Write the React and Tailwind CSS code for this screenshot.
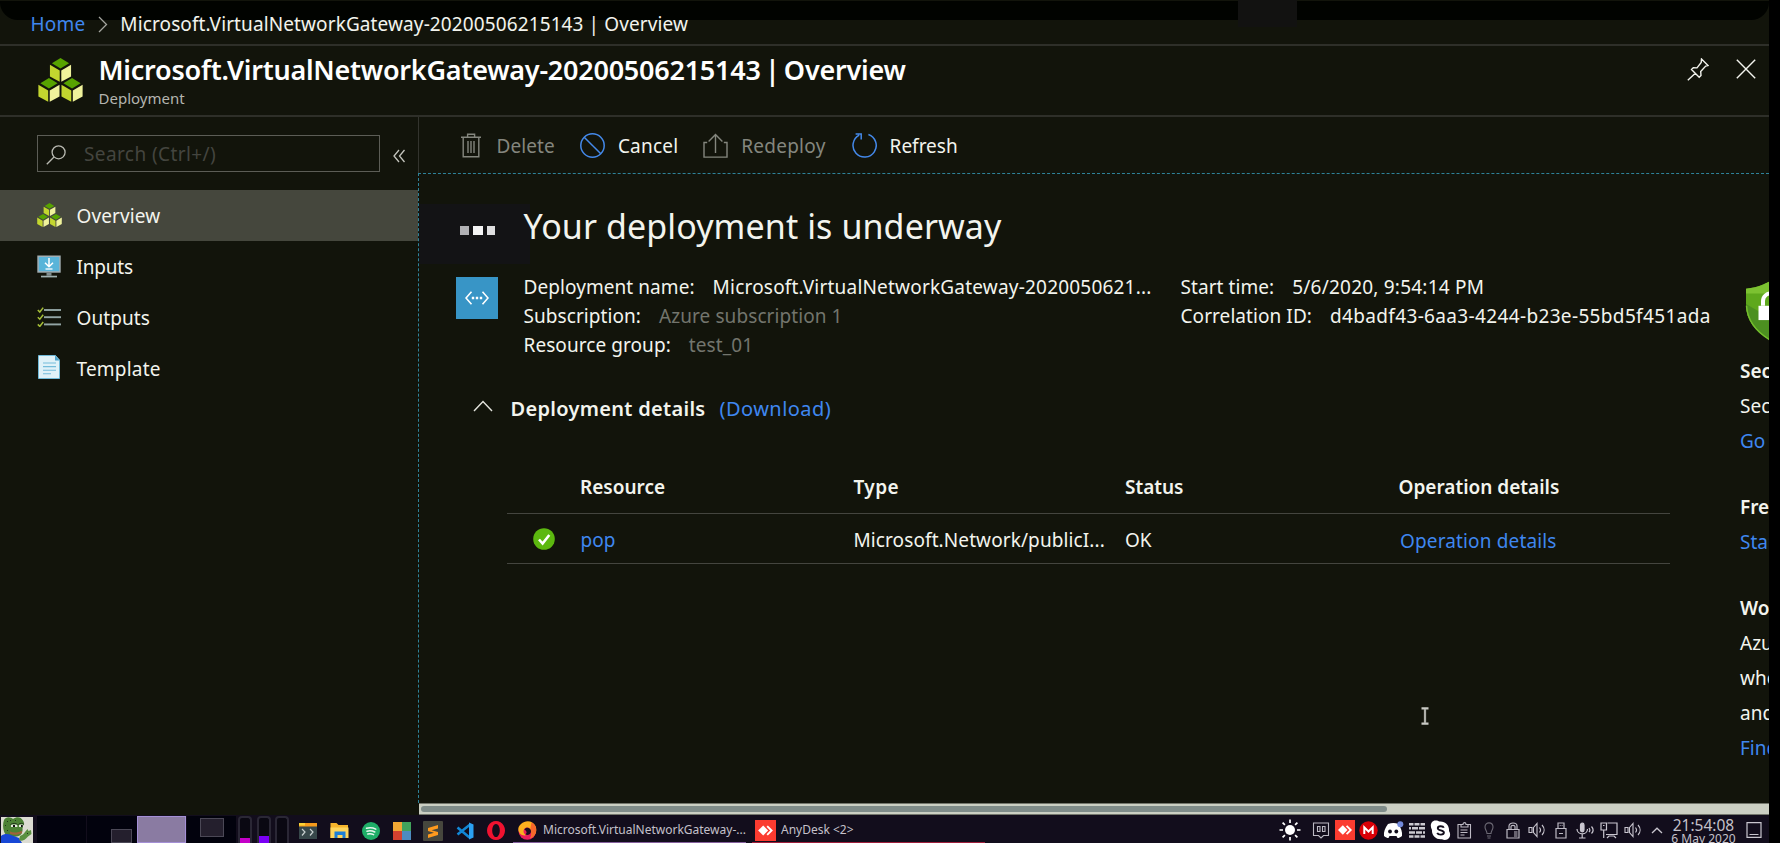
import React from 'react'

const Cubes = ({ className }) => (
  <svg viewBox="0 0 46 44" className={className} preserveAspectRatio="none">
    {[[0, 0], [-11.8, 20], [11.8, 20]].map(([x, y]) => (
      <g key={x} transform={`translate(${x} ${y})`}>
        <path d="M23 0l8.8 5.3L23 10.6l-8.8-5.3z" fill="#57a300" />
        <path d="M12.2 6.8l10 5.6v11.4l-10-5.4z" fill="#c3d62f" />
        <path d="M33.8 6.8l-10 5.6v11.4l10-5.4z" fill="#eff29b" />
      </g>
    ))}
  </svg>
)

const InputsIcon = () => (
  <svg viewBox="0 0 24 23" className="h-[23px] w-6">
    <path d="M0.3 0.5h23.4v17.2H0.3z" fill="#a3aeb2" />
    <path d="M1.8 2h20.4v14.2H1.8z" fill="#59b4d9" />
    <path d="M9.5 17.7h5v3h-5z" fill="#7f8c8d" />
    <path d="M4 20.7h16v1.7H4z" fill="#9fb0b0" />
    <path d="M12 3v8.5M8 7.8l4 4 4-4" stroke="#fff" strokeWidth="1.5" fill="none" />
    <path d="M8.5 14h7" stroke="#fff" strokeWidth="1.3" />
  </svg>
)

const OutputsIcon = () => (
  <svg viewBox="0 0 24 20" className="h-5 w-6">
    {[3, 10.2, 17.4].map((y) => (
      <g key={y} fill="none">
        <path d={`M0.8 ${y}l2 2 3.4-4.4`} stroke="#a5be38" strokeWidth="1.5" />
        <path d={`M7 ${y}h17`} stroke="#93a5a5" strokeWidth="1.9" />
      </g>
    ))}
  </svg>
)

const TemplateIcon = () => (
  <svg viewBox="0 0 22 24" className="-mt-[2px] ml-px h-6 w-[22px]">
    <path d="M0.5 0.5h17l4 4.6v18.4H0.5z" fill="#dff1f8" stroke="#6fb9d8" />
    <path d="M17 0.5l4.5 5H17z" fill="#4da3cb" />
    <path d="M5 8h13M5 11.6h13M5 15.2h13M5 18.8h8" stroke="#74bcda" strokeWidth="1.1" />
  </svg>
)

const TrashIcon = () => (
  <svg viewBox="0 0 25 25" className="size-[25px]" fill="none" stroke="#84867e" strokeWidth="1.4">
    <path d="M2 4.2h20M8.6 4V1.2h7V4M4.2 4.2v19.6h15.6V4.2M9 8v12M12 8v12M15 8v12" />
  </svg>
)
const CancelIcon = () => (
  <svg viewBox="0 0 25 25" className="size-[25px]" fill="none" stroke="#4489ea" strokeWidth="1.5">
    <circle cx="12.5" cy="12.5" r="11.7" />
    <path d="M4.2 4.2l16.6 16.6" />
  </svg>
)
const RedeployIcon = () => (
  <svg viewBox="0 0 25 25" className="size-[25px]" fill="none" stroke="#84867e" strokeWidth="1.4">
    <path d="M4.2 9.5H1v14.6h23V9.5h-3.2M12.5 20V1.5M5.6 8.6l6.9-7 6.9 7" />
  </svg>
)
const RefreshIcon = () => (
  <svg viewBox="0 0 25 25" className="size-[25px]" fill="none" stroke="#4489ea" strokeWidth="1.5">
    <path d="M16.4 1.5A11.6 11.6 0 1 1 7.2 2.2M3.6 1h5.6v5.6" />
  </svg>
)

const NAV = [
  { label: 'Overview', icon: <Cubes className="h-6 w-[25px]" />, active: true, cls: 'tracking-[0.1px]' },
  { label: 'Inputs', icon: <InputsIcon />, cls: 'tracking-[-0.2px]' },
  { label: 'Outputs', icon: <OutputsIcon />, cls: 'tracking-[0.1px]' },
  { label: 'Template', icon: <TemplateIcon />, cls: 'tracking-[0.2px]' },
]

const Field = ({ label, value, muted, cls = '' }) => (
  <div className="flex gap-[18px] whitespace-nowrap">
    <span className="tracking-[0.07px]">{label}</span>
    <span className={`${muted ? 'text-[#73756d]' : ''} ${cls}`}>{value}</span>
  </div>
)

const Shield = () => (
  <svg viewBox="0 0 54 64" className="h-[61px] w-[54px] shrink-0" preserveAspectRatio="none">
    <path d="M27 0c-5 0-8 6-26 8v16c0 18 10 30 26 39 16-9 26-21 26-39V8C35 6 32 0 27 0z" fill="#5ea81c" />
    <path d="M27 0c-5 0-8 6-26 8v5h52V8C35 6 32 0 27 0z" fill="#7cc231" />
    <path d="M1 24c0 18 10 30 26 39V40z" fill="#4c9020" />
    <path d="M1.5 26c1 17 10 28 25.500 37" stroke="#74bd2d" strokeWidth="1.5" fill="none" />
    <path d="M18 26v-5c0-11 18-11 18 0v5" stroke="#fff" strokeWidth="4" fill="none" />
    <path d="M13.500 26h27v15h-27z" fill="#fff" />
  </svg>
)

const Pepe = () => (
  <svg viewBox="0 0 32 26" className="ml-px h-[26px] w-8 shrink-0 self-end">
    <path d="M0 0h32v26H0z" fill="#dcdcd2" />
    <path d="M3 3c2-4 7-3 9-1 4-3 8-2 10 1.500 2 3 1 5-.5 7.500.5 4-1 8-6 8.500-5 1-11 0-12.500-5C1.500 10 2 6 3 3z" fill="#4d8236" />
    <path d="M0 19c3-2.500 7-2.500 10-1l8 3 3 5H0z" fill="#1747d6" />
    <path d="M19 19c2-1 4-2 5-4l2.500-3 1 2 2.500-1 .5 4-3.500 2.500c-3 4-7 5-9 3.500z" fill="#5a9140" />
    <path d="M10 7.500h6l.5 2.500H10zM18 7.500h4.500l.5 2.500h-5z" fill="#e9eee2" />
    <path d="M9.500 7.500c2.500-1.500 5-1.500 7 0M17.500 7.500c2-1.500 4-1.500 5.500 0" stroke="#20381a" strokeWidth="1" fill="none" />
    <path d="M12 8h2v2h-2zM20 8h1.800v2H20z" fill="#111" />
    <path d="M9 14.500c4 1.800 8 1 12-.5v2c-4 2-8 2.500-12 .8z" fill="#a0623c" />
    <path d="M6 4h1v1H6zM9 3h1v1H9zM4 8h1v1H4zM6 13h1v1H6zM26 16h1v1h-1zM14 3h1v1h-1z" fill="#20381a" />
  </svg>
)

const AnyDeskIcon = ({ className }) => (
  <svg viewBox="0 0 20 20" className={className}>
    <path d="M0 0h20v20H0z" fill="#fb3b30" />
    <path d="M7.800 5.300l4.700 4.700-4.700 4.700L3 10z" fill="#fff" />
    <path d="M11.600 5.800l4.200 4.200-4.200 4.200" stroke="#fff" strokeWidth="1.800" fill="none" />
  </svg>
)

const VolumeIcon = () => (
  <svg viewBox="0 0 18 16" className="h-4 w-[18px]" fill="none" stroke="#c9c6cf" strokeWidth="1.100">
    <path d="M1 5.500h3v5H1zM5.500 5.500l3.500-4v13l-3.500-4zM11.500 5.500c1.300 1.500 1.300 3.500 0 5M14 3c2.800 3 2.800 7 0 10" />
  </svg>
)

const Meter = ({ fill }) => (
  <div className="flex h-[27px] w-[14px] shrink-0 flex-col justify-end overflow-hidden rounded-t-[4px] border-2 border-b-0 border-[#2a2735] bg-[#0a0812]">
    <div className={fill} />
  </div>
)

const Tray = () => (
  <div className="flex h-full items-center pt-[2px]">
    <svg viewBox="0 0 22 22" className="size-[22px]" stroke="#fff" strokeWidth="1.700">
      <circle cx="11" cy="11" r="5" fill="#fff" stroke="none" />
      <path d="M11 0.500v3.500M11 18v3.500M0.500 11H4M18 11h3.500M3.600 3.600l2.300 2.300M16.100 16.100l2.300 2.300M3.600 18.400l2.300-2.300M16.100 5.900l2.300-2.300" />
    </svg>
    <svg viewBox="0 0 18 17" className="ml-[11px] h-[17px] w-[18px]" fill="none" stroke="#bdbac4" strokeWidth="1.100">
      <path d="M1.500 1h15v12.500h-5l-2.500 2.500-2.500-2.500h-5zM5.500 4.500h2.500v5H5.500zM10.500 4.500H13v5h-2.500z" />
    </svg>
    <AnyDeskIcon className="ml-[5px] size-5" />
    <svg viewBox="0 0 19 19" className="ml-[4px] size-[19px]">
      <circle cx="9.500" cy="9.500" r="9.200" fill="#d90007" />
      <path d="M5.300 13V6.300l4.200 4.200 4.200-4.200V13" stroke="#fff" strokeWidth="2" fill="none" />
    </svg>
    <svg viewBox="0 0 21 18" className="ml-[5px] h-[18px] w-[21px]">
      <path d="M5 3c4-1.300 7-1.300 10.500 0 2.500 4 4 8 3.500 12-2 1.500-3 2-4.500 2l-1-2h-7l-1 2C4 17 3 16.500 1 15c-.5-4 1-8 4-12z" fill="#fff" />
      <circle cx="7" cy="10.500" r="1.900" fill="#120d1c" />
      <circle cx="13.300" cy="10.500" r="1.900" fill="#120d1c" />
      <circle cx="17.300" cy="3.200" r="3" fill="#7289da" />
    </svg>
    <svg viewBox="0 0 16 15" className="ml-[5px] h-[15px] w-4" fill="#cbc9d0">
      <path d="M0 0h4.500v2.500H0zM5.500 0h5v2.500h-5zM11.500 0H16v2.500h-4.500zM0 4.100h2v2.500H0zM3 4.100h6v2.500H3zM10 4.100h6v2.500h-6zM0 8.200h6v2.500H0zM7 8.200h6v2.500H7zM14 8.200h2v2.500h-2zM0 12.300h4.500v2.500H0zM5.500 12.300h5v2.500h-5zM11.500 12.300H16v2.500h-4.500z" />
    </svg>
    <svg viewBox="0 0 21 21" className="ml-[5px] size-[21px]">
      <path d="M5.500 0.500c2 0 3 .6 4 1 6-.5 10 4 9.500 9.500 1.500 2.500 1.500 5 0 7s-4.500 2.500-7 1.300C6 20 1.500 15.500 2 10-.5 6 1 .5 5.500.500z" fill="#fff" />
      <path d="M13.800 7.800c-.8-2.200-6-2.200-6 .4 0 2.800 6.100 1.600 6.100 4.400 0 2.700-5.700 2.700-6.700.2" stroke="#120d1c" strokeWidth="1.900" fill="none" />
    </svg>
    <svg viewBox="0 0 15 17" className="ml-[6px] h-[17px] w-[15px]" fill="none" stroke="#bdbac4" strokeWidth="1.100">
      <path d="M4 2.500H1v13.500h12.500V2.500H11M4 5V2.500h2c0-2.500 3-2.500 3 0h2V5zM3.500 8h7M3.500 10.500h7M3.500 13h4" />
    </svg>
    <svg viewBox="0 0 10 17" className="ml-[12px] h-[17px] w-[10px]" fill="none" stroke="#6d6a75" strokeWidth="1.100">
      <path d="M3 11.500C3 9 1 8 1 5c0-5.500 8-5.500 8 0 0 3-2 4-2 6.500zM3 14h4M3.500 16h3" />
    </svg>
    <svg viewBox="0 0 14 17" className="ml-[12px] h-[17px] w-[14px]" fill="none" stroke="#bdbac4" strokeWidth="1.200">
      <path d="M1 7.500h12v8.500H1zM3 7.500V4c0-4 8-4 8 0v3.500M5 7V4.500c0-1.500 4-1.500 4 0V7M8 10h3.500M8 12h3.500M8 14h3.500" />
    </svg>
    <span className="ml-[8px]"><VolumeIcon /></span>
    <svg viewBox="0 0 12 17" className="ml-[9px] h-[17px] w-3" fill="none" stroke="#bdbac4" strokeWidth="1.200">
      <path d="M1 6.500h10V16H1zM3 6.500V1h6v5.500M4.800 3.500h.8M6.700 3.500h.8M4 11.500h4" />
    </svg>
    <svg viewBox="0 0 18 17" className="ml-[9px] h-[17px] w-[18px]" fill="none" stroke="#c9c6cf" strokeWidth="1.200">
      <path d="M4.500 3c0-2.500 3.500-2.500 3.500 0v5c0 2.500-3.500 2.500-3.500 0z" fill="#c9c6cf" />
      <path d="M1 7c0 6.500 10.500 6.500 10.500 0M6.200 12v4M3 16h6.500M13 6c1 1.300 1 3 0 4M15.500 4.500c2 2.300 2 5 0 7" />
    </svg>
    <svg viewBox="0 0 18 17" className="ml-[6px] h-[17px] w-[18px]" fill="none" stroke="#c9c6cf" strokeWidth="1.200">
      <path d="M7.500 1h9.500v11.500H7.500M1 1h5.500v7H1zM3.700 8v8M3 3.500h1.500M7 16l2-2h5l2 2M6 12.500h1.500" />
    </svg>
    <span className="ml-[6px]"><VolumeIcon /></span>
    <svg viewBox="0 0 12 7" className="ml-[9px] h-[7px] w-3" fill="none" stroke="#c9c6cf" strokeWidth="1.300">
      <path d="M1 6l5-4.800L11 6" />
    </svg>
    <div className="ml-[8px] w-[65px] self-start whitespace-nowrap text-center text-[#c4c1ca]">
      <div className="text-[15.5px] leading-[16px]">21:54:08</div>
      <div className="text-[12px] leading-[12px]">6 May 2020</div>
    </div>
    <svg viewBox="0 0 16 16" className="ml-[10px] size-4" fill="none" stroke="#c9c6cf" strokeWidth="1.200">
      <path d="M1 0.700h14v14.600H1zM3.500 12.500h9" />
    </svg>
  </div>
)

const Taskbar = () => (
  <div className="flex h-7 w-[1769px] shrink-0 items-center overflow-hidden bg-[#120d1c]">
    <Pepe />
    <div className="ml-1 flex h-full shrink-0 gap-px pt-px">
      <div className="w-[49px] bg-[#02020d]" />
      <div className="flex w-[50px] items-end justify-end bg-[#02020d] pr-[5px]">
        <div className="h-[14px] w-[21px] border border-[#4b4856] bg-[#241f2d]" />
      </div>
      <div className="-ml-px w-[49px] border border-[#a48fd6] bg-[#8a7ba2]" />
      <div className="w-[49px] bg-[#02020d] pl-[13px] pt-[2px]">
        <div className="h-[19px] w-6 border border-[#4b4856] bg-[#241f2d]" />
      </div>
    </div>
    <div className="ml-[2px] flex h-full shrink-0 gap-[4.500px] pt-px">
      <Meter fill="h-[5px] bg-[#c400c8]" />
      <Meter fill="h-[7px] bg-[#7a00f5]" />
      <Meter fill="h-0" />
    </div>
    <div className="ml-[10px] flex shrink-0 items-center pt-[3px]">
      <svg viewBox="0 0 18 16" className="h-4 w-[18px]">
        <path d="M0 2h18v14H0z" fill="#37474a" />
        <path d="M0 0h18v3.500H0z" fill="#f59a1b" />
        <path d="M0 0h6v2.500H0z" fill="#fbd235" />
        <path d="M3 6l3 3-3 3.500M11 6l3 3-3 3.500" stroke="#c8d0d0" strokeWidth="1.200" fill="none" />
      </svg>
      <svg viewBox="0 0 19 17" className="ml-[13px] h-[17px] w-[19px]">
        <path d="M0.500 1h6l2 2h9.500v13H.500z" fill="#f7b52c" />
        <path d="M.500 5.500h18V16H.500z" fill="#ffd65c" />
        <path d="M4.500 16V9.500h11V16h-3v-3h-5v3z" fill="#1d7fd6" />
      </svg>
      <svg viewBox="0 0 18 18" className="ml-[13px] size-[18px]">
        <circle cx="9" cy="9" r="9" fill="#1fae68" />
        <path d="M4.500 6.300c3-.8 6.500-.6 9.300.8M5 9.200c2.800-.7 5.400-.4 7.800.8M5.800 12c2.200-.5 4-.3 5.800.6" stroke="#e8f7ee" strokeWidth="1.500" fill="none" strokeLinecap="round" />
      </svg>
      <svg viewBox="0 0 18 18" className="ml-[13px] size-[18px]">
        <path d="M0 0h9v9H0z" fill="#f2a734" />
        <path d="M9 0h9v9H9z" fill="#41a35c" />
        <path d="M0 9h9v9H0z" fill="#d3412f" />
        <path d="M9 9h9v9H9z" fill="#4d8bc0" />
      </svg>
      <svg viewBox="0 0 20 20" className="ml-[12px] size-5">
        <rect width="20" height="20" rx="1" fill="#46463d" />
        <path d="M15 4v3.400L8.500 9.300 15 11v3L5 17v-3.400l6-1.900-6-1.800V7z" fill="#ff9a1e" />
      </svg>
      <svg viewBox="0 0 18 18" className="ml-[13px] size-[18px]" fill="none">
        <path d="M13.500 3L1.500 12.500M1.500 5.500l12 10" stroke="#1287d6" strokeWidth="2.600" />
        <path d="M13 0.500l4.500 2v13l-4.500 2z" fill="#2ba0f2" />
      </svg>
      <svg viewBox="0 0 18 19" className="ml-[13px] h-[19px] w-[18px]">
        <path fillRule="evenodd" d="M9 0a9 9.500 0 1 0 .01 0zM9 3a3.800 6.500 0 1 1-.01 0z" fill="#f01230" />
      </svg>
    </div>
    <div className="ml-[8px] flex h-full w-[233px] shrink-0 items-center border-b border-[#86619f] pl-[5px] pt-[3px] text-[12px] text-[#c4c1ca]">
      <svg viewBox="0 0 19 19" className="size-[19px] shrink-0">
        <circle cx="9.300" cy="10" r="8.800" fill="#ec1c5c" />
        <path d="M3 3C8-1.500 15 0 17.500 5c2.200 5-.5 10.500-5 12 1.500-3 1.500-6-.5-9-2.500-2.500-6-1.500-6.500 2 0 2 1 3.500 3 4-4 1.500-8-1.500-8.200-5.500C.3 6 1.200 4.500 3 3z" fill="#fdb01e" />
        <path d="M13.500 1.500c4 2 5.500 6 4.300 10-1 3-3 5-5.800 6 1.500-3 1.700-6.500.2-9z" fill="#f7672b" />
        <path d="M6.300 8.500c1.200-2.300 4.400-2.500 6-.3 1.200 1.800.7 3.800-.7 5-1.300 1-3.200 1-4.300 0 1-.5 1.400-1.300 1.200-2.300-.2-1-1.200-2-2.200-2.400z" fill="#1b0d20" />
      </svg>
      <span className="ml-[6px] whitespace-nowrap">Microsoft.VirtualNetworkGateway-...</span>
    </div>
    <div className="ml-[6px] flex h-full w-[233px] shrink-0 items-center border-b border-[#a01f3c] pl-[3px] pt-[3px] text-[12px] text-[#c4c1ca]">
      <AnyDeskIcon className="size-[21px]" />
      <span className="ml-[5px] whitespace-nowrap">AnyDesk &lt;2&gt;</span>
    </div>
    <div className="ml-auto h-full shrink-0 pr-[7px]">
      <Tray />
    </div>
  </div>
)

export default function App() {
  return (
    <div className="relative flex h-[843px] w-[1780px] flex-col overflow-hidden bg-black font-['Noto_Sans','Open_Sans',sans-serif] text-[19px] text-[#f3f4ee]">
      <div className="relative flex h-[815px] w-[1769px] shrink-0 flex-col overflow-hidden bg-[#12140b]">
        <div className="absolute left-0 top-px h-[18.500px] w-full rounded-b-[18px] bg-[#010300]" />
        <div className="absolute left-[1238px] top-0 h-[27px] w-[59px] bg-[#121211]" />

        <nav className="relative flex h-[46px] shrink-0 items-center whitespace-nowrap border-b-2 border-[#2e2f29] pl-[30.500px] pt-[5px]">
          <a className="tracking-[0.2px] text-[#3f87f0]">Home</a>
          <svg viewBox="0 0 10 17" className="ml-[13px] h-[17px] w-[10px]" fill="none" stroke="#a5a69f" strokeWidth="1.300">
            <path d="M1 1l7.500 7.500L1 16" />
          </svg>
          <span className="ml-[12px] tracking-[0.11px]">Microsoft.VirtualNetworkGateway-20200506215143 | Overview</span>
        </nav>

        <header className="flex h-[71px] shrink-0 border-b-2 border-[#2e2f29] pl-[38px] pt-[6px]">
          <Cubes className="mt-[6px] h-[44px] w-[45px]" />
          <div className="ml-[15.500px] whitespace-nowrap">
            <h1 className="text-[27px] font-semibold leading-9 tracking-[-0.24px] text-white [word-spacing:-2.500px]">
              Microsoft.VirtualNetworkGateway-20200506215143 | Overview
            </h1>
            <div className="text-[15px] leading-5 text-[#b4b5af]">Deployment</div>
          </div>
          <svg viewBox="0 0 22 23" className="ml-auto mt-[6px] h-[23px] w-[22px]" fill="none" stroke="#f3f4ee" strokeWidth="1.400">
            <path d="M14.500 1l6.500 6.500-2.300.6-5 5.300.3 4-1.800 1.800L4.500 11.500l1.800-1.800 3.700.2 4.200-5.400zM8.300 15.200L.8 22.300" />
          </svg>
          <svg viewBox="0 0 20 20" className="ml-[27px] mr-[13.500px] mt-[7px] size-5" fill="none" stroke="#f3f4ee" strokeWidth="1.400">
            <path d="M0.800.800l18.400 18.400M19.200.800L.800 19.200" />
          </svg>
        </header>

        <div className="flex min-h-0 flex-1">
          <aside className="w-[417.500px] shrink-0 pt-[18px]">
            <div className="flex h-[37px] items-center pl-[37px]">
              <div className="flex h-full w-[343px] items-center border border-[#5c5d56] pl-[8px]">
                <svg viewBox="0 0 20 20" className="mt-[3px] size-5" fill="none" stroke="#b9bab2" strokeWidth="1.300">
                  <circle cx="12.600" cy="7.300" r="6.500" />
                  <path d="M8 12L.8 19.200" />
                </svg>
                <span className="ml-[18px] pt-px tracking-[0.4px] text-[#44453f]">Search (Ctrl+/)</span>
              </div>
              <svg viewBox="0 0 12 14" className="ml-[13px] mt-[5px] h-[14px] w-3" fill="none" stroke="#c4c5be" strokeWidth="1.300">
                <path d="M6 1L1 7l5 6M11.500 1l-5 6 5 6" />
              </svg>
            </div>
            <ul className="mt-[18px]">
              {NAV.map((n) => (
                <li key={n.label} className={`flex h-[50.900px] items-center pl-[37px] ${n.active ? 'bg-[#45473d]' : ''}`}>
                  <span className="flex w-[39.500px]">{n.icon}</span>
                  <span className={`pt-[2.500px] ${n.cls}`}>{n.label}</span>
                </li>
              ))}
            </ul>
          </aside>

          <main className="flex min-w-0 flex-1 flex-col">
            <div className="flex h-14 shrink-0 items-center gap-[26px] border-l-[1.500px] border-[#33342e] pl-[40px]">
              <div className="flex items-center gap-3 text-[#84867e]"><TrashIcon /><span className="pl-px pt-[2px] tracking-[0.1px]">Delete</span></div>
              <div className="-ml-px flex items-center gap-[13px]"><CancelIcon /><span className="pt-[2px] tracking-[0.2px]">Cancel</span></div>
              <div className="-ml-px flex items-center gap-[13px] text-[#84867e]"><RedeployIcon /><span className="pt-[2px] tracking-[0.25px]">Redeploy</span></div>
              <div className="flex items-center gap-3"><RefreshIcon /><span className="pl-px pt-[2px]">Refresh</span></div>
            </div>

            <section className="relative flex min-h-0 flex-1 border-l border-t border-dashed border-[#2e8299]">
              <div className="absolute left-0 top-[30px] flex h-[60px] w-[111px] bg-[#131315] pl-[41px] pt-[21.500px]">
                <span className="size-[9px] bg-[#b1b1b4]" />
                <span className="ml-[4.500px] size-[9.500px] bg-[#f4f4f4]" />
                <span className="ml-[4.500px] h-[9.500px] w-[8px] bg-[#dededf]" />
              </div>
              <div className="relative w-[1321.500px] shrink-0">
                <h2 className="mt-7 pl-[105px] text-[34px] leading-[48px] tracking-[0.1px]">Your deployment is underway</h2>
                <div className="mt-[23px] flex pl-[37px] leading-[28.700px]">
                  <div className="mt-[4px] flex size-[42px] items-center justify-center bg-[#3895c6]">
                    <svg viewBox="0 0 24 14" className="h-[14px] w-6" fill="none" stroke="#fff" strokeWidth="1.600">
                      <path d="M6.500.800L1 7l5.500 6.200M17.500.800L23 7l-5.500 6.200" />
                      <path d="M6.800 7h2.400M10.800 7h2.400M14.800 7h2.400" strokeWidth="2.400" />
                    </svg>
                  </div>
                  <div className="ml-[26px] w-[657px] pt-[0.300px]">
                    <Field label="Deployment name:" value="Microsoft.VirtualNetworkGateway-2020050621..." cls="tracking-[0.2px]" />
                    <Field label="Subscription:" value="Azure subscription 1" muted cls="tracking-[0.08px]" />
                    <Field label="Resource group:" value="test_01" muted cls="tracking-[0.1px]" />
                  </div>
                  <div className="pt-[0.300px]">
                    <Field label="Start time:" value="5/6/2020, 9:54:14 PM" cls="tracking-[0.22px]" />
                    <Field label="Correlation ID:" value="d4badf43-6aa3-4244-b23e-55bd5f451ada" cls="tracking-[0.35px]" />
                  </div>
                </div>
                <div className="mt-[33.500px] flex h-8 items-center pl-[54px] text-[20px]">
                  <svg viewBox="0 0 20 12" className="-mt-[5px] h-3 w-5" fill="none" stroke="#e4e5de" strokeWidth="1.400">
                    <path d="M1 11L10 1.500 19 11" />
                  </svg>
                  <span className="ml-[18px] font-semibold tracking-[0.3px]">Deployment details</span>
                  <a className="ml-[14px] tracking-[0.45px] text-[#3f87f0]">(Download)</a>
                </div>
                <div className="ml-[88px] mt-[34px] w-[1163.500px]">
                  <div className="grid h-[55.500px] grid-cols-[73.500px_273.500px_271.500px_273.500px_1fr] items-center border-b border-[#44453f] pt-[2px] font-semibold">
                    <span />
                    <span>Resource</span>
                    <span className="tracking-[0.4px]">Type</span>
                    <span>Status</span>
                    <span>Operation details</span>
                  </div>
                  <div className="grid h-[50px] grid-cols-[74px_273px_271.500px_273.500px_1fr] items-center border-b border-[#44453f]">
                    <svg viewBox="0 0 22 22" className="ml-[26px] mt-px size-[22px]">
                      <circle cx="11" cy="11" r="10.800" fill="#5cb80f" />
                      <path d="M6 11.500l3.600 4L16.300 7" stroke="#fff" strokeWidth="2.600" fill="none" />
                    </svg>
                    <a className="pt-[2px] text-[#3f87f0]">pop</a>
                    <span className="whitespace-nowrap pt-[2px] tracking-[0.1px]">Microsoft.Network/publicI...</span>
                    <span className="pt-[2px]">OK</span>
                    <a className="pl-[1.500px] pt-[5px] tracking-[0.14px] text-[#3f87f0]">Operation details</a>
                  </div>
                </div>
              </div>

              <aside className="w-[400px] shrink-0 whitespace-nowrap leading-[34.800px]">
                <div className="ml-[5px] mt-[107px] h-[73px]"><Shield /></div>
                <div className="font-semibold">Security Center</div>
                <div>Secure your apps and infrastructure</div>
                <a className="block text-[#3f87f0]">Go to Azure security center</a>
                <div className="mt-[32px] font-semibold">Free Microsoft tutorials</div>
                <a className="block text-[#3f87f0]">Start learning today</a>
                <div className="mt-[31.400px] font-semibold">Work with an expert</div>
                <div>Azure experts are service provider</div>
                <div>who can help manage your assets</div>
                <div>and be your first line of support.</div>
                <a className="block text-[#3f87f0]">Find an Azure expert</a>
              </aside>
            </section>

            <div className="ml-px h-3 shrink-0 border-y border-[#73766c] bg-[#cbcfc3] pl-[2px] pt-[2px]">
              <div className="h-[6px] w-[966px] rounded-full bg-[#7f8c89]" />
            </div>
          </main>
        </div>

        <svg viewBox="0 0 8 18" className="absolute left-[1421px] top-[707px] h-[18px] w-2" fill="none">
          <path d="M0.500 1.300h7M0.500 16.700h7M4 1v16" stroke="#c9cac5" strokeWidth="2.200" />
          <path d="M4 2v14" stroke="#85867f" strokeWidth="0.800" />
        </svg>
      </div>
      <Taskbar />
    </div>
  )
}
